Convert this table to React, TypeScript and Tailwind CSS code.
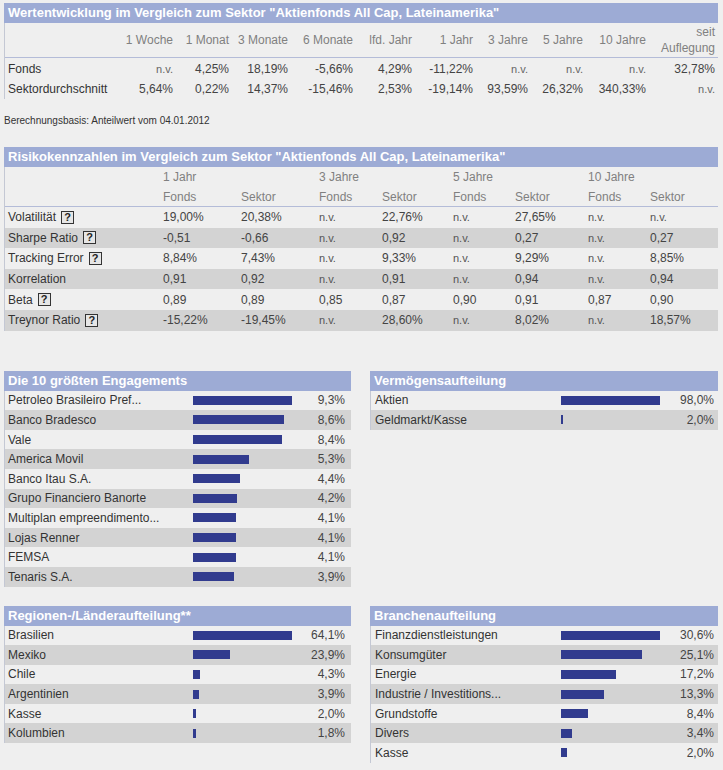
import React from 'react'

type Bar = { label: string; value: number; text: string }

const perfHead = ['1 Woche', '1 Monat', '3 Monate', '6 Monate', 'lfd. Jahr', '1 Jahr', '3 Jahre', '5 Jahre', '10 Jahre']
const perfRows = [
  { label: 'Fonds', values: ['n.v.', '4,25%', '18,19%', '-5,66%', '4,29%', '-11,22%', 'n.v.', 'n.v.', 'n.v.', '32,78%'] },
  { label: 'Sektordurchschnitt', values: ['5,64%', '0,22%', '14,37%', '-15,46%', '2,53%', '-19,14%', '93,59%', '26,32%', '340,33%', 'n.v.'] },
]

const riskRows = [
  { label: 'Volatilität', help: true, values: ['19,00%', '20,38%', 'n.v.', '22,76%', 'n.v.', '27,65%', 'n.v.', 'n.v.'] },
  { label: 'Sharpe Ratio', help: true, values: ['-0,51', '-0,66', 'n.v.', '0,92', 'n.v.', '0,27', 'n.v.', '0,27'] },
  { label: 'Tracking Error', help: true, values: ['8,84%', '7,43%', 'n.v.', '9,33%', 'n.v.', '9,29%', 'n.v.', '8,85%'] },
  { label: 'Korrelation', help: false, values: ['0,91', '0,92', 'n.v.', '0,91', 'n.v.', '0,94', 'n.v.', '0,94'] },
  { label: 'Beta', help: true, values: ['0,89', '0,89', '0,85', '0,87', '0,90', '0,91', '0,87', '0,90'] },
  { label: 'Treynor Ratio', help: true, values: ['-15,22%', '-19,45%', 'n.v.', '28,60%', 'n.v.', '8,02%', 'n.v.', '18,57%'] },
]

const engagements: Bar[] = [
  { label: 'Petroleo Brasileiro Pref...', value: 9.3, text: '9,3%' },
  { label: 'Banco Bradesco', value: 8.6, text: '8,6%' },
  { label: 'Vale', value: 8.4, text: '8,4%' },
  { label: 'America Movil', value: 5.3, text: '5,3%' },
  { label: 'Banco Itau S.A.', value: 4.4, text: '4,4%' },
  { label: 'Grupo Financiero Banorte', value: 4.2, text: '4,2%' },
  { label: 'Multiplan empreendimento...', value: 4.1, text: '4,1%' },
  { label: 'Lojas Renner', value: 4.1, text: '4,1%' },
  { label: 'FEMSA', value: 4.1, text: '4,1%' },
  { label: 'Tenaris S.A.', value: 3.9, text: '3,9%' },
]

const vermoegen: Bar[] = [
  { label: 'Aktien', value: 98, text: '98,0%' },
  { label: 'Geldmarkt/Kasse', value: 2, text: '2,0%' },
]

const regionen: Bar[] = [
  { label: 'Brasilien', value: 64.1, text: '64,1%' },
  { label: 'Mexiko', value: 23.9, text: '23,9%' },
  { label: 'Chile', value: 4.3, text: '4,3%' },
  { label: 'Argentinien', value: 3.9, text: '3,9%' },
  { label: 'Kasse', value: 2, text: '2,0%' },
  { label: 'Kolumbien', value: 1.8, text: '1,8%' },
]

const branchen: Bar[] = [
  { label: 'Finanzdienstleistungen', value: 30.6, text: '30,6%' },
  { label: 'Konsumgüter', value: 25.1, text: '25,1%' },
  { label: 'Energie', value: 17.2, text: '17,2%' },
  { label: 'Industrie / Investitions...', value: 13.3, text: '13,3%' },
  { label: 'Grundstoffe', value: 8.4, text: '8,4%' },
  { label: 'Divers', value: 3.4, text: '3,4%' },
  { label: 'Kasse', value: 2, text: '2,0%' },
]

const perfGrid = 'grid grid-cols-[116px_55px_56px_59px_65px_59px_61px_55px_55px_63px_69px]'
const riskGrid = 'grid grid-cols-[155px_78px_78px_63px_71px_62px_73px_62px_71px]'

const SectionHead = ({ title }: { title: string }) => (
  <div className="h-[20px] bg-[#9dabd5] pl-[4px] flex items-center text-[13px] font-bold text-white">
    {title}
  </div>
)

const Help = () => (
  <span className="ml-[5px] inline-flex w-[13px] h-[13px] items-center justify-center border border-[#333] bg-[#e6e6e6] text-[11px] font-bold leading-none text-[#222]">
    ?
  </span>
)

// bar panels (allocation tables)
const BarPanel = ({ title, rows, wide }: { title: string; rows: Bar[]; wide?: boolean }) => {
  const max = Math.max(...rows.map(r => r.value))
  return (
    <div className={wide ? 'w-[348px]' : 'w-[347px]'}>
      <SectionHead title={title} />
      <div className="border-l border-[#c4c8d4]">
        {rows.map((r, i) => (
          <div
            key={r.label}
            className={`h-[19.6px] flex items-center text-[12px] ${i % 2 === 1 ? 'bg-[#d3d3d3]' : ''}`}
          >
            <div className={wide ? 'w-[190px] pl-[4px] text-[#333]' : 'w-[188px] pl-[3px] text-[#333]'}>{r.label}</div>
            <div className="flex-1">
              <div className="h-[9px] bg-[#313b8e]" style={{ width: `${(r.value / max) * 98.5}px` }} />
            </div>
            <div className={wide ? 'pr-[4px] text-[#444]' : 'pr-[6px] text-[#444]'}>{r.text}</div>
          </div>
        ))}
      </div>
    </div>
  )
}

export default function App() {
  return (
    <div className="min-h-[770px] w-[723px] bg-[#efefef] pt-[3px] font-['Liberation_Sans',Arial,sans-serif] text-[12px] text-[#333]">
      {/* Wertentwicklung */}
      <div className="ml-[4px] w-[714px]">
        <SectionHead title={'Wertentwicklung im Vergleich zum Sektor "Aktienfonds All Cap, Lateinamerika"'} />
        <div className="border-l border-[#c4c8d4]">
          <div className={`${perfGrid} h-[35px] items-center border-b border-[#b4bcd8] text-[#808080]`}>
            <div />
            {perfHead.map(h => (
              <div key={h} className="text-right pr-[3px]">{h}</div>
            ))}
            <div className="text-right pr-[3px] leading-[16px]">seit<br />Auflegung</div>
          </div>
          <div className="pt-[1px]">
            {perfRows.map(r => (
              <div key={r.label} className={`${perfGrid} h-[20px] items-center`}>
                <div className="pl-[3px] text-[#333] whitespace-nowrap">{r.label}</div>
                {r.values.map((v, i) => (
                  <div key={i} className={`text-right pr-[3px] ${v === 'n.v.' ? 'text-[#666] text-[11px]' : 'text-[#444]'}`}>{v}</div>
                ))}
              </div>
            ))}
          </div>
        </div>
      </div>

      <div className="ml-[4px] mt-[14px] text-[10px] text-[#333]">Berechnungsbasis: Anteilwert vom 04.01.2012</div>

      {/* Risikokennzahlen */}
      <div className="ml-[4px] mt-[19px] w-[714px]">
        <SectionHead title={'Risikokennzahlen im Vergleich zum Sektor "Aktienfonds All Cap, Lateinamerika"'} />
        <div className="border-l border-[#c4c8d4]">
          <div className={`${riskGrid} h-[20px] items-center text-[#808080]`}>
            <div />
            <div className="col-span-2 pl-[3px]">1 Jahr</div>
            <div className="col-span-2 pl-[3px]">3 Jahre</div>
            <div className="col-span-2 pl-[3px]">5 Jahre</div>
            <div className="col-span-2 pl-[3px]">10 Jahre</div>
          </div>
          <div className={`${riskGrid} h-[20px] items-center border-b border-[#b4bcd8] text-[#808080]`}>
            <div />
            {['Fonds', 'Sektor', 'Fonds', 'Sektor', 'Fonds', 'Sektor', 'Fonds', 'Sektor'].map((h, i) => (
              <div key={i} className="pl-[3px]">{h}</div>
            ))}
          </div>
          {riskRows.map((r, idx) => (
            <div
              key={r.label}
              className={`${riskGrid} h-[20.6px] items-center ${idx % 2 === 1 ? 'bg-[#d3d3d3]' : ''}`}
            >
              <div className="pl-[3px] flex items-center text-[#333]">
                {r.label}
                {r.help && <Help />}
              </div>
              {r.values.map((v, i) => (
                <div key={i} className={`pl-[3px] ${v === 'n.v.' ? 'text-[#555] text-[11px]' : 'text-[#444]'}`}>{v}</div>
              ))}
            </div>
          ))}
        </div>
      </div>

      {/* Allocations */}
      <div className="ml-[4px] mt-[40px] flex gap-[19px] items-start">
        <BarPanel title="Die 10 größten Engagements" rows={engagements} />
        <BarPanel title="Vermögensaufteilung" rows={vermoegen} wide />
      </div>
      <div className="ml-[4px] mt-[19px] flex gap-[19px] items-start">
        <BarPanel title="Regionen-/Länderaufteilung**" rows={regionen} />
        <BarPanel title="Branchenaufteilung" rows={branchen} wide />
      </div>
    </div>
  )
}
